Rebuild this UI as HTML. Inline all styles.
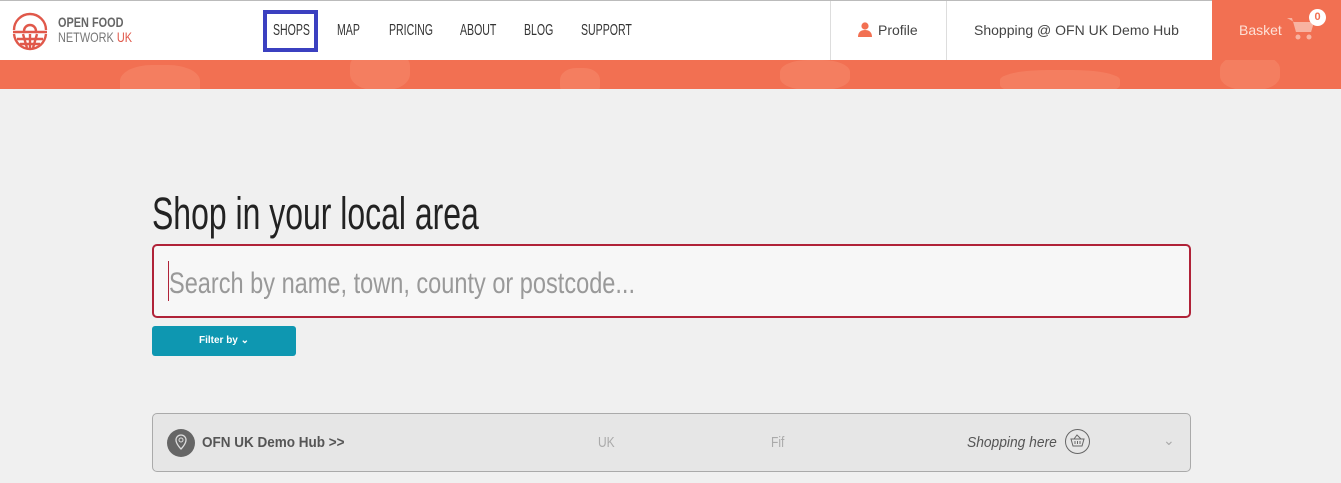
<!DOCTYPE html>
<html><head><meta charset="utf-8"><style>
*{margin:0;padding:0;box-sizing:border-box}
body{width:1341px;height:483px;overflow:hidden;background:#f0f0f0;font-family:"Liberation Sans",sans-serif;position:relative}
.nav{position:absolute;left:0;top:0;width:1341px;height:60px;background:#fff;border-top:1px solid #bbb}
.c{display:inline-block;transform:scaleX(.8);transform-origin:left center;white-space:nowrap}
.menu a{position:absolute;top:21px;font-size:16px;color:#333;text-decoration:none}
.menu .c{transform:scaleX(.66)}
.band{position:absolute;left:0;top:60px;width:1341px;height:29px;background:#f27052;overflow:hidden}
.band i{position:absolute;background:#f47e60;border-radius:40%}
</style></head><body>
<div class="nav">
<svg style="position:absolute;left:10px;top:11px" width="40" height="40" viewBox="0 0 40 40"><g fill="none" stroke="#e0584a" stroke-width="2.4"><path d="M4 18A16 16 0 0 1 36 18"/><path d="M3 20h34"/><path d="M4 22c1 9 8 15 16 15s15-6 16-15"/><path d="M7 27h26M10 32h20M13 22l4 14M20 22v15M27 22l-4 14"/><path d="M14 19a6 6 0 0 1 12 0"/></g></svg>
<div style="position:absolute;left:58px;top:15px;font-size:14px;font-weight:bold;color:#666;line-height:13px"><span class="c" style="transform:scaleX(.78)">OPEN FOOD</span></div>
<div style="position:absolute;left:58px;top:29px;font-size:14px;color:#777;line-height:14px"><span class="c" style="transform:scaleX(.78)">NETWORK <span style="color:#e0584a">UK</span></span></div>
<div class="menu">
<div style="position:absolute;left:263px;top:9px;width:55px;height:42px;border:4px solid #3b40c0"></div>
<a style="left:273px"><span class="c">SHOPS</span></a>
<a style="left:337px"><span class="c">MAP</span></a>
<a style="left:389px"><span class="c">PRICING</span></a>
<a style="left:460px"><span class="c">ABOUT</span></a>
<a style="left:524px"><span class="c">BLOG</span></a>
<a style="left:581px"><span class="c">SUPPORT</span></a>
</div>
<div style="position:absolute;left:830px;top:0;width:1px;height:59px;background:#ddd"></div>
<div style="position:absolute;left:946px;top:0;width:1px;height:59px;background:#ddd"></div>
<svg style="position:absolute;left:858px;top:21px" width="14" height="15" viewBox="0 0 14 15"><circle cx="7" cy="4" r="3.6" fill="#f27052"/><path d="M0 15c0-5 3-7 7-7s7 2 7 7z" fill="#f27052"/></svg>
<div style="position:absolute;left:878px;top:21px;font-size:14px;color:#444">Profile</div>
<div style="position:absolute;left:974px;top:21px;font-size:14px;color:#444">Shopping @ OFN UK Demo Hub</div>
<div style="position:absolute;left:1212px;top:-1px;width:129px;height:61px;background:#f27052">
<div style="position:absolute;left:27px;top:22px;font-size:14px;color:#fde0d6">Basket</div>
<svg style="position:absolute;left:74px;top:15px" width="30" height="26" viewBox="0 0 30 26"><path d="M1 3h5l4 14h15l3-10H8" fill="#f8b3a1"/><path d="M8 7h20l-3 10H10z" fill="#f8b3a1"/><circle cx="12" cy="22" r="2.5" fill="#f8b3a1"/><circle cx="23" cy="22" r="2.5" fill="#f8b3a1"/></svg>
<div style="position:absolute;left:97px;top:9px;width:17px;height:17px;border-radius:50%;background:#fff;color:#f27052;font-size:11px;text-align:center;line-height:17px;font-weight:bold">0</div>
</div>
</div>
<div class="band"><i style="left:120px;top:5px;width:80px;height:40px"></i><i style="left:350px;top:-10px;width:60px;height:40px"></i><i style="left:560px;top:8px;width:40px;height:30px"></i><i style="left:780px;top:0;width:70px;height:30px"></i><i style="left:1000px;top:10px;width:120px;height:25px"></i><i style="left:1220px;top:-5px;width:60px;height:35px"></i></div>
<div style="position:absolute;left:152px;top:188px;font-size:45px;color:#222"><span class="c" style="transform:scaleX(.71)">Shop in your local area</span></div>
<div style="position:absolute;left:152px;top:244px;width:1039px;height:74px;border:2px solid #b02238;border-radius:5px;background:#f7f7f7">
<div style="position:absolute;left:14px;top:15px;width:1px;height:40px;background:#b02238"></div>
<div style="position:absolute;left:15px;top:21px;font-size:30px;color:#999"><span class="c" style="transform:scaleX(.785)">Search by name, town, county or postcode...</span></div>
</div>
<div style="position:absolute;left:152px;top:326px;width:144px;height:30px;background:#0e97b1;border-radius:3px;color:#fff;font-size:10px;font-weight:bold;text-align:center;line-height:30px">Filter by ⌄</div>
<div style="position:absolute;left:152px;top:413px;width:1039px;height:59px;border:1px solid #aaa;border-radius:5px;background:#e6e6e6">
<div style="position:absolute;left:14px;top:15px;width:28px;height:28px;border-radius:50%;background:#666"><svg width="28" height="28" viewBox="0 0 28 28"><path d="M14 6a5 5 0 0 1 5 5c0 4-5 9-5 9s-5-5-5-9a5 5 0 0 1 5-5z" fill="none" stroke="#ddd" stroke-width="1.3"/><circle cx="14" cy="11" r="2" fill="none" stroke="#ddd"/></svg></div>
<div style="position:absolute;left:49px;top:20px;font-size:15px;font-weight:bold;color:#555"><span class="c" style="transform:scaleX(.9)">OFN UK Demo Hub &gt;&gt;</span></div>
<div style="position:absolute;left:445px;top:20px;font-size:15px;color:#aaa"><span class="c">UK</span></div>
<div style="position:absolute;left:618px;top:20px;font-size:15px;color:#aaa"><span class="c">Fif</span></div>
<div style="position:absolute;left:814px;top:20px;font-size:15px;font-style:italic;color:#555"><span class="c" style="transform:scaleX(.92)">Shopping here</span></div>
<div style="position:absolute;left:912px;top:15px;width:25px;height:25px;border-radius:50%;border:1px solid #666"><svg width="23" height="23" viewBox="0 0 23 23"><path d="M5 9h13l-2 7H7z" fill="none" stroke="#666"/><path d="M8 9l3-4 4 4M9 11v3M11.5 11v3M14 11v3" stroke="#666" fill="none"/></svg></div>
<div style="position:absolute;left:1010px;top:18px;font-size:14px;color:#aaa">⌄</div>
</div>
</body></html>
